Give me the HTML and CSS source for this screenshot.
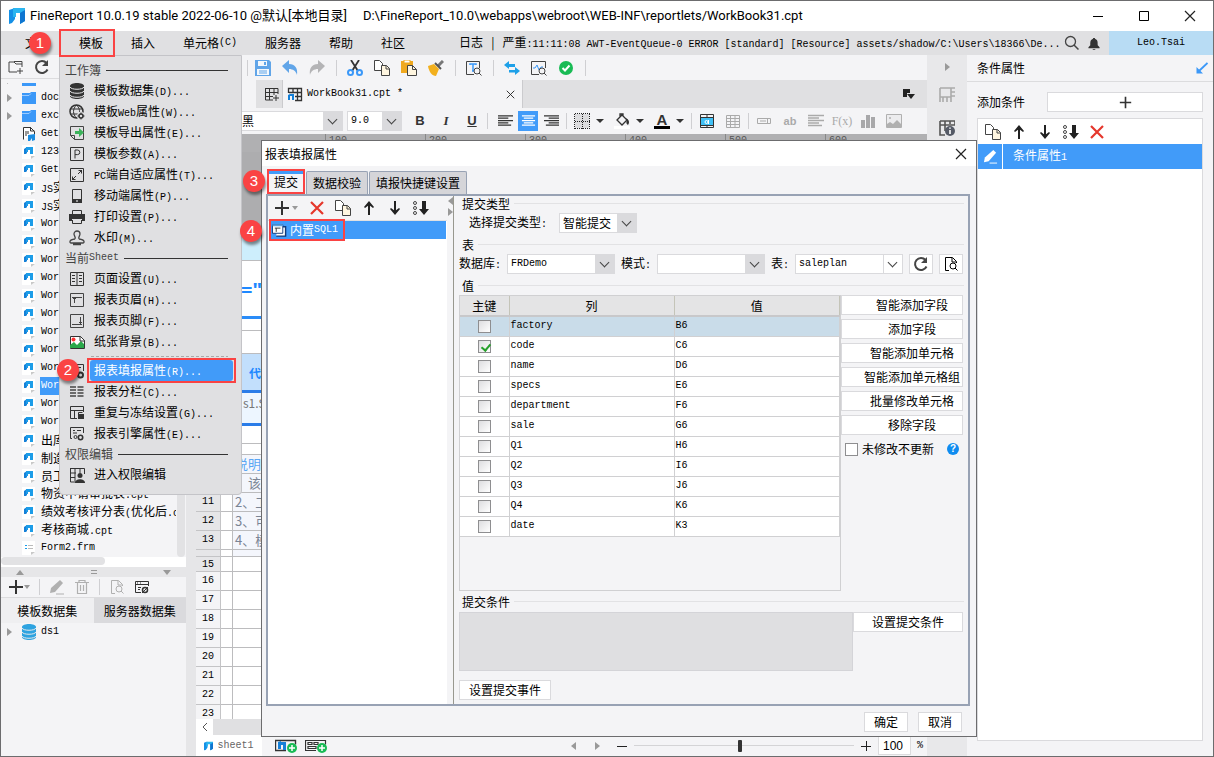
FILE: index.html
```html
<!DOCTYPE html>
<html lang="zh-CN">
<head>
    <meta charset="UTF-8">
    <meta name="viewport" content="width=device-width, initial-scale=1.0">
    <title>FineReport 10.0.19</title>
    <link rel="stylesheet" href="styles.css">
</head>
<body>
    <!-- 图标库 -->
    <svg class="sprite" aria-hidden="true">
        <symbol id="i-logo" viewBox="0 0 16 16"><path d="M0 2l6-2v11l-3 4-3 1z" fill="#1590e6"/><path d="M4 0h12v13l-5 3V5H7v4H4z" fill="#2bb5f0"/><path d="M11 5l5-3v11l-5 3z" fill="#0f75d0"/></symbol>
        <symbol id="i-plus" viewBox="0 0 16 16"><path d="M8 1v14M1 8h14" stroke="#333" stroke-width="2"/></symbol>
        <symbol id="i-refresh" viewBox="0 0 16 16"><path d="M13.500 10.500A6 6 0 1 1 12.500 4" fill="none" stroke="#444" stroke-width="2"/><path d="M14 1v6H8z" fill="#444"/></symbol>
        <symbol id="i-newdir" viewBox="0 0 16 16"><path d="M9 13H1V3h5l2 2h6v3M6 2.500h8V5M12 9v6M9 12h6" fill="none" stroke="#444"/></symbol>
        <symbol id="i-folder" viewBox="0 0 14 12"><path d="M0 1h8l1-1h5v12H0z" fill="#3b98f8"/><path d="M0 3.500h7l2-2" stroke="#9ccbff" fill="none"/></symbol>
        <symbol id="i-cpt" viewBox="0 0 14 16"><path d="M0 1h13v11l-4 3H0z" fill="#fff"/><path d="M9 15v-3h4z" fill="#c8c8c8"/><path d="M2 5l3-2v6l-1 1H2z" fill="#1580d8"/><path d="M4 3h7v7H8V6H6v2H4z" fill="#1c9ce8"/></symbol>
        <symbol id="i-frm" viewBox="0 0 14 16"><path d="M0 1h13v11l-4 3H0z" fill="#fff"/><path d="M9 15v-3h4z" fill="#c8c8c8"/><path d="M3 5.500h2M3 8.500h2" stroke="#1c9ce8"/><path d="M6 5.500h5M6 8.500h5" stroke="#bbb"/></symbol>
        <symbol id="i-get" viewBox="0 0 14 16"><path d="M1.500 13.500v-12h7l4 4v3" fill="#fff" stroke="#333"/><path d="M8.500 1v4h4M4 5v5M6 5v3" stroke="#333" fill="none"/><path d="M6 9l7-1v6l-3 1v-3l-2 3H6z" fill="#1c8ce0"/></symbol>
        <symbol id="i-db" viewBox="0 0 14 16"><path d="M0 3v10c0 4 14 4 14 0V3c0-4-14-4-14 0z"/><path d="M0 4c1 3 13 3 14 0M0 8c1 3 13 3 14 0M0 12c1 3 13 3 14 0" fill="none" stroke="#e8e8ea"/></symbol>
        <symbol id="i-web" viewBox="0 0 16 16"><circle cx="7.500" cy="7.500" r="6.500" fill="none" stroke="#333" stroke-width="1.500"/><path d="M1 5h13M1 10h8M7.500 1c-4 4-4 9 0 13M7.500 1c3 3 3 5 3 7" fill="none" stroke="#333"/><circle cx="12" cy="12" r="4" fill="#e0e0e2"/><circle cx="12" cy="12" r="2" fill="none" stroke="#333" stroke-width="1.500"/><path d="M12 8.500v7M8.500 12h7" stroke="#333" stroke-dasharray="1.500 4"/></symbol>
        <symbol id="i-export" viewBox="0 0 16 16"><path d="M1.500 1.500h13v13h-9l-4-4zM1.500 10.500h4v4" fill="none" stroke="#444"/><path d="M6 6h4V3l5 4.500-5 4.500V9H6z" fill="#3bb35a"/></symbol>
        <symbol id="i-param" viewBox="0 0 16 16"><path d="M1.500 1.500h13v13h-13zM6 12.500V4h2.500a2.300 2.300 0 0 1 0 4.600H6" fill="none" stroke="#333"/></symbol>
        <symbol id="i-fit" viewBox="0 0 16 16"><path d="M1.500 1.500h13v13h-13zM9 7l4-4M9.500 3.500h3v3M7 9l-4 4M3.500 9.500v3h3" fill="none" stroke="#333"/></symbol>
        <symbol id="i-phone" viewBox="0 0 16 16"><path d="M3.500 1.500h9v13h-9z" fill="none" stroke="#333"/><path d="M3 11h10v4H3z" fill="#333"/><path d="M7 13h2" stroke="#fff"/></symbol>
        <symbol id="i-print" viewBox="0 0 16 16"><path d="M3.500 5V1.500h9V5M3.500 11v3.500h9V11" fill="none" stroke="#333"/><path d="M0 5h16v7h-3v-2H3v2H0z" fill="#333"/></symbol>
        <symbol id="i-stamp" viewBox="0 0 16 16"><path d="M6 9c1-2-1-3-1-5a3 3 0 0 1 6 0c0 2-2 3-1 5M6 9c-7 1-5 4-4 4h12c1 0 3-3-4-4M4 14.500h8" fill="none" stroke="#444" stroke-width="1.300"/></symbol>
        <symbol id="i-page" viewBox="0 0 16 16"><path d="M1.500 1.500h13v13h-13zM8 2v12M3 4.500h3M3 7.500h3M3 10.500h3M10 4.500h3M10 7.500h3M10 10.500h3" fill="none" stroke="#333"/></symbol>
        <symbol id="i-head" viewBox="0 0 16 16"><path d="M1.500 1.500h13v13h-13zM3 5.500h10M5.500 5v6M4 7l1.500-1.500L7 7" fill="none" stroke="#444"/></symbol>
        <symbol id="i-foot" viewBox="0 0 16 16"><path d="M1.500 1.500h13v13h-13zM3 11.500h10M11.500 4v7M10 9l1.500 1.500L13 9" fill="none" stroke="#444"/></symbol>
        <symbol id="i-pic" viewBox="0 0 16 16"><path d="M1.500 2.500h10l4 4v8h-14z" fill="#fff" stroke="#333"/><circle cx="4.500" cy="5.500" r="2" fill="#f33"/><path d="M1 14V11l4-3 3 3 4-4 3 3v4z" fill="#2aa84a"/><path d="M11 2v5h5" fill="none" stroke="#333"/></symbol>
        <symbol id="i-fill" viewBox="0 0 16 16"><path d="M14.500 8V1.500h-13v12H7M4 4.500h8M4 7.500h5M4 10.500h3" fill="none" stroke="#333"/><circle cx="11.500" cy="12" r="2.500" fill="none" stroke="#333" stroke-width="2"/></symbol>
        <symbol id="i-cols" viewBox="0 0 16 16"><path d="M1 3h6M1 6h6M1 9h6M1 12h6M8.500 3h6M8.500 6h6M8.500 9h6M8.500 12h6" stroke="#444" stroke-width="1.500"/></symbol>
        <symbol id="i-freeze" viewBox="0 0 16 16"><path d="M14.500 7V1.500h-13v12H8M2 5.500h12M5.500 5v9M9.500 9V7.500h4" fill="none" stroke="#333"/><path d="M9 9h6v5H9z" fill="#333"/></symbol>
        <symbol id="i-engine" viewBox="0 0 16 16"><path d="M14.500 7V1.500h-13v11H3M4 4.500h2M8 4.500h4M4 7h4" fill="none" stroke="#333"/><circle cx="6.500" cy="11" r="1.500" fill="none" stroke="#333"/><circle cx="11.500" cy="11.500" r="2.200" fill="none" stroke="#333" stroke-width="1.600"/></symbol>
        <symbol id="i-auth" viewBox="0 0 16 16"><path d="M1 1.500h14.500V7M1.500 1v14H7M6 1v13M11 1v5M1 6h6M1 10.500h5" fill="none" stroke="#333"/><circle cx="11" cy="8.500" r="2.500" fill="#333"/><path d="M6 16c0-5 10-5 10 0z" fill="#333"/></symbol>
        <symbol id="i-save" viewBox="0 0 16 16"><path d="M0 0h14l2 2v14H0z" fill="#61a5e8"/><path d="M3 1h9v5H3zM2 9h12v6H2z" fill="#f4f8fc"/><path d="M9 2h2v3H9z" fill="#61a5e8"/><path d="M4 11h8M4 13h8" stroke="#61a5e8"/></symbol>
        <symbol id="i-undo" viewBox="0 0 16 16"><path d="M0 6l7-6v4c6 0 9 4 8 11-1-4-4-6-8-6v4z"/></symbol>
        <symbol id="i-cut" viewBox="0 0 16 16"><path d="M4 0l7 11M12 0L5 11" stroke="#333" stroke-width="1.800"/><circle cx="3.500" cy="12.500" r="2.500" fill="none" stroke="#3b98f8" stroke-width="2"/><circle cx="12.500" cy="12.500" r="2.500" fill="none" stroke="#3b98f8" stroke-width="2"/></symbol>
        <symbol id="i-copy" viewBox="0 0 16 16"><path d="M.5 .5h5l3 3v7h-8z" fill="#fff" stroke="#444"/><path d="M7.500 5.500h5l3 3v7h-8z" fill="#fff6e0" stroke="#444"/><path d="M12 5.500V9h3.500" fill="none" stroke="#444"/></symbol>
        <symbol id="i-paste" viewBox="0 0 16 16"><path d="M0 1h12v12H0z" fill="#f0a91e"/><path d="M3 0h6v3H3z" fill="#fff" stroke="#f0a91e"/><path d="M6.500 5.500h5l4 4v6h-9z" fill="#fff6e0" stroke="#444"/><path d="M11.500 5.500v4h4" fill="none" stroke="#444"/></symbol>
        <symbol id="i-brush" viewBox="0 0 16 16"><path d="M15 1l-5 5" stroke="#777" stroke-width="3"/><path d="M7 3l6 6" stroke="#555" stroke-width="2"/><path d="M0 6l6-2 5 5-3 7c-4 0-7-4-8-10z" fill="#f2b01e"/></symbol>
        <symbol id="i-find" viewBox="0 0 16 16"><path d="M8 14.500H.5v-13h13V8" fill="none" stroke="#444"/><path d="M4 5V4h6v1M7 4v7M6 11h2" fill="none" stroke="#3b98f8" stroke-width="1.500"/><circle cx="11" cy="11" r="3" fill="#f4f4f6" stroke="#444"/><path d="M13 13l2.500 2.500" stroke="#444"/></symbol>
        <symbol id="i-swap" viewBox="0 0 16 16"><path d="M0 5l5-4v3h6v3H5v2zM16 11l-5-4v3H5v2.500h6V15z" fill="#1ea0e8"/></symbol>
        <symbol id="i-monitor" viewBox="0 0 16 16"><path d="M8 14.500H.5v-13h14V8" fill="none" stroke="#444"/><path d="M2 8h2l2-3 2 5 2-3h2" fill="none" stroke="#3b98f8"/><circle cx="11" cy="11" r="3" fill="#f4f4f6" stroke="#444"/><path d="M13 13l2.500 2.500" stroke="#444"/></symbol>
        <symbol id="i-ok" viewBox="0 0 16 16"><circle cx="8" cy="8" r="7" fill="#19bb55"/><path d="M4.500 8l2.500 2.500 4.500-5" fill="none" stroke="#fff" stroke-width="2"/></symbol>
        <symbol id="i-addtab" viewBox="0 0 16 16"><path d="M1 2.500h13V8M1.500 2v12H9M1 6.500h13M1 10.500h8M5.500 2v12M10 2v7M12 9v6M9 12h6" fill="none" stroke="#333"/></symbol>
        <symbol id="i-book" viewBox="0 0 16 16"><path d="M1.500 7V2.500h13v12H8M2 6.500h12M8 10.500h6M6 2v4M10.500 2v12" fill="none" stroke="#333" stroke-width="1.300"/><path d="M1 9l2-1v6H1zM3 8h4v6H5v-4H3z" fill="#1580d8"/></symbol>
        <symbol id="i-close" viewBox="0 0 12 12"><path d="M1 1l10 10M11 1L1 11" stroke="#222" stroke-width="1.200"/></symbol>
        <symbol id="i-del" viewBox="0 0 14 14"><path d="M1 1l12 12M13 1L1 13" stroke="#e5372c" stroke-width="2.200"/></symbol>
        <symbol id="i-up" viewBox="0 0 12 14"><path d="M6 14V4" stroke="#222" stroke-width="2"/><path d="M1 6l5-6 5 6-1 1-4-3-4 3z" fill="#222"/></symbol>
        <symbol id="i-sort" viewBox="0 0 16 16"><path d="M9 1h4v8h3l-5 6-5-6h3z" fill="#222"/><circle cx="2" cy="3" r="1.500" fill="none" stroke="#444"/><circle cx="2" cy="8" r="1.500" fill="none" stroke="#444"/><circle cx="2" cy="13" r="1.500" fill="none" stroke="#444"/></symbol>
        <symbol id="i-left" viewBox="0 0 16 14"><path d="M0 1.500h16M0 4h11M0 6.500h16M0 9h11M0 11.500h14" stroke="currentColor" stroke-width="1.300"/></symbol>
        <symbol id="i-center" viewBox="0 0 16 14"><path d="M1 1.500h14M3 4h10M1 6.500h14M3 9h10M1 11.500h14" stroke="currentColor" stroke-width="1.300"/></symbol>
        <symbol id="i-right" viewBox="0 0 16 14"><path d="M0 1.500h16M5 4h11M0 6.500h16M5 9h11M2 11.500h14" stroke="currentColor" stroke-width="1.300"/></symbol>
        <symbol id="i-border" viewBox="0 0 16 16"><path d="M1 1h14v14H1z" fill="#dcdcde"/><path d="M1 .5h15M.5 1v15M1 15.500h15M15.500 1v15M1 8.500h15M8.500 1v15" stroke="#222" stroke-dasharray="1 1" fill="none"/></symbol>
        <symbol id="i-bucket" viewBox="0 0 16 16"><path d="M3 7l5-5 5 5-5 5zM6 4V1h3v3" fill="none" stroke="#333" stroke-width="1.300"/><path d="M12 5c3 2 4 4 2 7-2-1-2-3-1-5z" fill="#333"/><path d="M0 13h16v3H0z" fill="#fff"/></symbol>
        <symbol id="i-cell" viewBox="0 0 16 16"><path d="M1.500 1.500h13v13h-13z" fill="#3fc0f5" stroke="#333"/><path d="M2 2h12v2H2zM2 13h12v1H2z" fill="#f4f4f6"/><path d="M1 4.500h14M1 12.500h14M8 2v2M8 13v2" stroke="#333"/><circle cx="7.500" cy="9" r="1.500" fill="none" stroke="#fff"/><path d="M9.500 7v4" stroke="#fff"/></symbol>
        <symbol id="i-grid" viewBox="0 0 16 16"><path d="M1.500 2.500h13v12h-13zM1 5.500h14M1 8.500h14M1 11.500h14M5.500 2v13M10 2v13" fill="none" stroke="#aaa"/></symbol>
        <symbol id="i-field" viewBox="0 0 16 16"><path d="M1.500 5.500h13v5h-13zM4 8h6M11.500 6v4" fill="none" stroke="#aaa"/></symbol>
        <symbol id="i-bars" viewBox="0 0 16 16"><path d="M1 7h4v8H1zM6 2h4v13H6zM11 4h4v11h-4z" fill="#a8a8aa"/></symbol>
        <symbol id="i-image" viewBox="0 0 16 16"><path d="M.5 1.500h15v13H.5z" fill="#ececee" stroke="#b0b0b0"/><path d="M1 14V11l3-2 3 2 4-4 4 4v3z" fill="#b0b0b0"/><circle cx="4" cy="5" r="1" fill="#b0b0b0"/></symbol>
        <symbol id="i-prop" viewBox="0 0 16 16"><path d="M1 1h15M1 1v14M1 10h11V1M12 5h4M12 9h4M4 10v5M8 10v5M12 10v5" fill="none" stroke="#aaa" stroke-width="1.600"/></symbol>
        <symbol id="i-info" viewBox="0 0 16 16"><path d="M1 1h15v4M1 1v14h5M6 1v10M11 1v3M1 5h15" fill="none" stroke="#555" stroke-width="1.600"/><circle cx="11" cy="11" r="5" fill="#555a66"/><path d="M11 10v4M11 7.500v1.200" stroke="#fff" stroke-width="1.600"/></symbol>
        <symbol id="i-pencil" viewBox="0 0 16 16"><path d="M1 14l1-5 9-8 3 3-8 9z"/><path d="M7 15h8" stroke="currentColor"/></symbol>
        <symbol id="i-trash" viewBox="0 0 16 16"><path d="M1 3.500h14M5 3V1.500h6V3M3.500 4v10.500h9V4M6.500 6v6M9.500 6v6" fill="none" stroke="#b0b0b0" stroke-width="1.200"/></symbol>
        <symbol id="i-preview" viewBox="0 0 16 16"><path d="M6 14.500H2.500v-13h7l4 4V7M9 2v4h4" fill="none" stroke="currentColor"/><circle cx="10" cy="10" r="3" fill="none" stroke="currentColor"/><path d="M12 12l2.500 2.500" stroke="currentColor"/></symbol>
        <symbol id="i-conn" viewBox="0 0 16 16"><path d="M7 13.500H1.500v-11h13V7M1 5.500h13M4 8.500h3M4 10.500h2" fill="none" stroke="#333"/><path d="M3 4h1M6 4h1" stroke="#333"/><circle cx="11" cy="11" r="2.500" fill="none" stroke="#333" stroke-width="1.500"/><path d="M8 14l6-6" stroke="#333"/></symbol>
        <symbol id="i-search" viewBox="0 0 16 16"><circle cx="6.500" cy="6.500" r="5" fill="none" stroke="#444" stroke-width="1.300"/><path d="M10 10l4.500 4.500" stroke="#444" stroke-width="1.500"/></symbol>
        <symbol id="i-bell" viewBox="0 0 12 14"><path d="M5 1h2v1c3 1 3 3 3 7l2 2v1H0v-1l2-2c0-4 0-6 3-7zM4 13h4l-2 1z" fill="#333"/></symbol>
        <symbol id="i-pin" viewBox="0 0 12 12"><path d="M11.500 1L3 9" stroke="#3b98f8" stroke-width="1.800"/><path d="M.5 5v6.500H7z" fill="#3b98f8"/></symbol>
        <symbol id="i-sql" viewBox="0 0 16 14"><path d="M5.500 3.500h9v10h-10" fill="#fff" stroke="#123a7a" stroke-width="1.500"/><path d="M.5 1.500h11v9H.5z" fill="#fff" stroke="#123a7a"/><path d="M.5 2h11" stroke="#5aa0e0" stroke-width="2"/><path d="M3 5h6M4.500 5v4" stroke="#333"/></symbol>
        <symbol id="i-addcpt" viewBox="0 0 22 14"><path d="M11 11.500H.5V1.500h20v4" fill="none" stroke="#333" stroke-width="1.400"/><path d="M3 3l3-1v8H3zM6 3h5v8H8V6H6z" fill="#1580d8"/><circle cx="17" cy="9" r="5" fill="#19bb55"/><path d="M14 9h6M17 6v6" stroke="#fff" stroke-width="1.500"/></symbol>
        <symbol id="i-addfrm" viewBox="0 0 22 14"><path d="M11 11.500H.5V1.500h20v4M3 3.500h4v2H3zM9 3.500h4v2H9zM3 7.500h8v2H3z" fill="none" stroke="#333" stroke-width="1.200"/><circle cx="17" cy="9" r="5" fill="#19bb55"/><path d="M14 9h6M17 6v6" stroke="#fff" stroke-width="1.500"/></symbol>
    </svg>

    <div class="window">
        <header class="title-bar">
            <svg class="icon"><use href="#i-logo"/></svg>
            <span class="title-name">FineReport 10.0.19 stable 2022-06-10 @默认[本地目录]</span>
            <span class="title-path">D:\FineReport_10.0\webapps\webroot\WEB-INF\reportlets/WorkBook31.cpt</span>
            <button class="win-btn" aria-label="最小化"><svg viewBox="0 0 12 12"><path d="M1 6.500h10" stroke="#000"/></svg></button>
            <button class="win-btn" aria-label="最大化"><svg viewBox="0 0 12 12"><path d="M1.500 1.500h9v9h-9z" fill="none" stroke="#000"/></svg></button>
            <button class="win-btn" aria-label="关闭"><svg><use href="#i-close"/></svg></button>
        </header>

        <nav class="menu-bar">
            <button class="menu-item first">文件<b class="badge">1</b></button>
            <button class="menu-item marked">模板</button>
            <button class="menu-item">插入</button>
            <button class="menu-item">单元格<span class="en">(C)</span></button>
            <button class="menu-item">服务器</button>
            <button class="menu-item">帮助</button>
            <button class="menu-item">社区</button>
            <div class="log">日志<span class="bar">|</span>严重<span class="en">:11:11:08 AWT-EventQueue-0 ERROR [standard] [Resource] assets/shadow/C:\Users\18366\De...</span></div>
            <button class="icon-btn" aria-label="搜索"><svg class="icon"><use href="#i-search"/></svg></button>
            <button class="icon-btn" aria-label="通知"><svg class="icon"><use href="#i-bell"/></svg></button>
            <button class="user en">Leo.Tsai</button>
        </nav>

        <div class="workspace">
            <!-- 左侧：文件树与数据集 -->
            <aside class="left">
                <div class="left-tools">
                    <button class="icon-btn" aria-label="新建目录"><svg class="icon"><use href="#i-newdir"/></svg></button>
                    <button class="icon-btn" aria-label="刷新"><svg class="icon"><use href="#i-refresh"/></svg></button>
                </div>
                <div class="tree-area">
                    <ul class="tree">
                        <li class="node dir"><svg><use href="#i-folder"/></svg><span class="en">dem</span></li>
                        <li class="node dir"><svg><use href="#i-folder"/></svg><span class="en">doc</span></li>
                        <li class="node dir"><svg><use href="#i-folder"/></svg><span class="en">exc</span></li>
                        <li class="node"><svg><use href="#i-get"/></svg><span class="en">Get</span></li>
                        <li class="node"><svg><use href="#i-cpt"/></svg><span class="en">123</span></li>
                        <li class="node"><svg><use href="#i-cpt"/></svg><span class="en">Get</span></li>
                        <li class="node"><svg><use href="#i-cpt"/></svg><span><span class="en">JS</span>实</span></li>
                        <li class="node"><svg><use href="#i-cpt"/></svg><span><span class="en">JS</span>实</span></li>
                        <li class="node"><svg><use href="#i-cpt"/></svg><span class="en">Wor</span></li>
                        <li class="node"><svg><use href="#i-cpt"/></svg><span class="en">Wor</span></li>
                        <li class="node"><svg><use href="#i-cpt"/></svg><span class="en">Wor</span></li>
                        <li class="node"><svg><use href="#i-cpt"/></svg><span class="en">Wor</span></li>
                        <li class="node"><svg><use href="#i-cpt"/></svg><span class="en">Wor</span></li>
                        <li class="node"><svg><use href="#i-cpt"/></svg><span class="en">Wor</span></li>
                        <li class="node"><svg><use href="#i-cpt"/></svg><span class="en">Wor</span></li>
                        <li class="node"><svg><use href="#i-cpt"/></svg><span class="en">Wor</span></li>
                        <li class="node"><svg><use href="#i-cpt"/></svg><span class="en">Wor</span></li>
                        <li class="node selected"><svg><use href="#i-cpt"/></svg><span class="en">Wor</span></li>
                        <li class="node"><svg><use href="#i-cpt"/></svg><span class="en">Wor</span></li>
                        <li class="node"><svg><use href="#i-cpt"/></svg><span class="en">Wor</span></li>
                        <li class="node"><svg><use href="#i-cpt"/></svg><span>出库</span></li>
                        <li class="node"><svg><use href="#i-cpt"/></svg><span>制造</span></li>
                        <li class="node"><svg><use href="#i-cpt"/></svg><span>员工</span></li>
                        <li class="node"><svg><use href="#i-cpt"/></svg><span>物资申请审批表<span class="en">.cpt</span></span></li>
                        <li class="node"><svg><use href="#i-cpt"/></svg><span>绩效考核评分表<span class="en">(</span>优化后<span class="en">.cpt</span></span></li>
                        <li class="node"><svg><use href="#i-cpt"/></svg><span>考核商城<span class="en">.cpt</span></span></li>
                        <li class="node"><svg><use href="#i-frm"/></svg><span class="en">Form2.frm</span></li>
                    </ul>
                    <div class="tree-scroll"></div>
                </div>
                <div class="tree-hscroll"><div class="thumb"></div></div>
                <div class="splitter"><i class="tri up"></i><span class="grip"></span><i class="tri down"></i></div>
                <div class="ds-tools">
                    <button class="icon-btn" aria-label="新增"><svg class="icon"><use href="#i-plus"/></svg><i class="tri down small"></i></button>
                    <span class="sep"></span>
                    <button class="icon-btn faded" aria-label="编辑"><svg class="icon"><use href="#i-pencil"/></svg></button>
                    <button class="icon-btn" aria-label="删除"><svg class="icon"><use href="#i-trash"/></svg></button>
                    <span class="sep"></span>
                    <button class="icon-btn faded" aria-label="预览"><svg class="icon"><use href="#i-preview"/></svg></button>
                    <button class="icon-btn" aria-label="数据连接"><svg class="icon"><use href="#i-conn"/></svg></button>
                </div>
                <div class="ds-tabs">
                    <button class="ds-tab">模板数据集</button>
                    <button class="ds-tab active">服务器数据集</button>
                </div>
                <ul class="ds-list">
                    <li class="node dir"><svg class="blue"><use href="#i-db"/></svg><span class="en">ds1</span></li>
                </ul>
            </aside>

            <!-- 中间：设计区 -->
            <main class="center">
                <div class="toolbar main-tools">
                    <span class="sep"></span>
                    <button class="icon-btn" aria-label="保存"><svg class="icon"><use href="#i-save"/></svg></button>
                    <button class="icon-btn" aria-label="撤销"><svg class="icon undo"><use href="#i-undo"/></svg></button>
                    <button class="icon-btn" aria-label="重做"><svg class="icon redo"><use href="#i-undo"/></svg></button>
                    <span class="sep"></span>
                    <button class="icon-btn" aria-label="剪切"><svg class="icon"><use href="#i-cut"/></svg></button>
                    <button class="icon-btn" aria-label="复制"><svg class="icon"><use href="#i-copy"/></svg></button>
                    <button class="icon-btn" aria-label="粘贴"><svg class="icon"><use href="#i-paste"/></svg></button>
                    <button class="icon-btn" aria-label="格式刷"><svg class="icon"><use href="#i-brush"/></svg></button>
                    <span class="sep"></span>
                    <button class="icon-btn" aria-label="查找"><svg class="icon"><use href="#i-find"/></svg></button>
                    <span class="sep"></span>
                    <button class="icon-btn" aria-label="切换"><svg class="icon"><use href="#i-swap"/></svg></button>
                    <button class="icon-btn" aria-label="监控"><svg class="icon"><use href="#i-monitor"/></svg></button>
                    <button class="icon-btn" aria-label="校验"><svg class="icon"><use href="#i-ok"/></svg></button>
                    <span class="sep"></span>
                </div>
                <div class="file-tabs">
                    <button class="add-tab" aria-label="新建模板"><svg class="icon"><use href="#i-addtab"/></svg></button>
                    <div class="file-tab">
                        <svg class="icon"><use href="#i-book"/></svg>
                        <span class="en">WorkBook31.cpt *</span>
                        <button class="tab-close" aria-label="关闭"><svg><use href="#i-close"/></svg></button>
                    </div>
                    <button class="tab-list" aria-label="模板列表"><svg viewBox="0 0 12 10"><path d="M0 0h7v4H4v4H0z" fill="#222"/><path d="M4 5h8l-4 5z" fill="#222"/></svg></button>
                </div>
                <div class="toolbar format-tools">
                    <span class="combo font"><select aria-label="字体"><option>黑</option></select></span>
                    <span class="combo size"><select class="en" aria-label="字号"><option>9.0</option></select></span>
                    <button class="style-btn"><b>B</b></button>
                    <button class="style-btn"><i>I</i></button>
                    <button class="style-btn"><u>U</u></button>
                    <span class="sep"></span>
                    <button class="align-btn" aria-label="左对齐"><svg class="icon"><use href="#i-left"/></svg></button>
                    <button class="align-btn on" aria-label="居中"><svg class="icon"><use href="#i-center"/></svg></button>
                    <button class="align-btn" aria-label="右对齐"><svg class="icon"><use href="#i-right"/></svg></button>
                    <span class="sep"></span>
                    <button class="drop-btn" aria-label="边框"><svg class="icon"><use href="#i-border"/></svg><i class="tri down small dark"></i></button>
                    <button class="drop-btn" aria-label="背景色"><svg class="icon"><use href="#i-bucket"/></svg><i class="tri down small dark"></i></button>
                    <button class="drop-btn"><b class="font-color">A</b><i class="tri down small dark"></i></button>
                    <span class="sep"></span>
                    <button class="icon-btn" aria-label="合并单元格"><svg class="icon"><use href="#i-cell"/></svg></button>
                    <button class="icon-btn" aria-label="拆分单元格"><svg class="icon"><use href="#i-grid"/></svg></button>
                    <span class="sep"></span>
                    <button class="icon-btn" aria-label="数据列"><svg class="icon"><use href="#i-field"/></svg></button>
                    <button class="icon-btn grey ab">ab</button>
                    <button class="icon-btn grey" aria-label="富文本"><svg class="icon"><use href="#i-left"/></svg></button>
                    <button class="icon-btn grey fx">F(x)</button>
                    <button class="icon-btn" aria-label="图表"><svg class="icon"><use href="#i-bars"/></svg></button>
                    <button class="icon-btn" aria-label="图片"><svg class="icon"><use href="#i-image"/></svg></button>
                </div>
                <div class="ruler"><span class="lead"></span><span>100</span><span>200</span><span>300</span><span>400</span><span>500</span><span>600</span></div>
                <div class="sheet">
                    <div class="line shade"></div>
                    <div class="line cyan"></div>
                    <div class="line formula"><span>="</span></div>
                    <div class="line blank"></div>
                    <div class="line blank tall"></div>
                    <div class="line caption"><span>代</span></div>
                    <div class="line bound"><span>s1.S</span></div>
                    <div class="line blank"></div>
                    <div class="line blank short"></div>
                    <div class="row note"><span class="no en"></span><span class="gap"></span><span class="cell hint">说明</span></div>
                    <div class="row note"><span class="no en"></span><span class="gap"></span><span class="cell">、该</span></div>
                    <div class="row note"><span class="no en">11</span><span class="gap"></span><span class="cell">2、工</span></div>
                    <div class="row note"><span class="no en">12</span><span class="gap"></span><span class="cell">3、可</span></div>
                    <div class="row note"><span class="no en">13</span><span class="gap"></span><span class="cell">4、模</span></div>
                    <div class="row note thin"><span class="no en"></span><span class="gap"></span><span class="cell"></span></div>
                    <div class="row tint"><span class="no en">15</span><span class="gap"></span><span class="cell"></span></div>
                    <div class="row"><span class="no en">16</span><span class="gap"></span><span class="cell"></span></div>
                    <div class="row"><span class="no en">17</span><span class="gap"></span><span class="cell"></span></div>
                    <div class="row"><span class="no en">18</span><span class="gap"></span><span class="cell"></span></div>
                    <div class="row"><span class="no en">19</span><span class="gap"></span><span class="cell"></span></div>
                    <div class="row"><span class="no en">20</span><span class="gap"></span><span class="cell"></span></div>
                    <div class="row"><span class="no en">21</span><span class="gap"></span><span class="cell"></span></div>
                    <div class="row"><span class="no en">22</span><span class="gap"></span><span class="cell"></span></div>
                    <div class="row"><span class="no en">23</span><span class="gap"></span><span class="cell"></span></div>
                </div>
                <div class="sheet-scroll"><button aria-label="向左滚动"><svg viewBox="0 0 8 10"><path d="M6 1L2 5l4 4" fill="none" stroke="#555"/></svg></button></div>
                <div class="status">
                    <button class="sheet-tab"><svg viewBox="0 0 16 16"><use href="#i-logo"/></svg><span class="en">sheet1</span></button>
                    <button class="add-sheet" aria-label="新增sheet"><svg><use href="#i-addcpt"/></svg></button>
                    <button class="add-sheet" aria-label="新增表单"><svg><use href="#i-addfrm"/></svg></button>
                    <div class="zoom">
                        <button class="nav" aria-label="上一个"><i class="tri back"></i></button>
                        <button class="nav" aria-label="下一个"><i class="tri fwd"></i></button>
                        <button aria-label="缩小"><svg viewBox="0 0 10 10"><path d="M0 5.500h10" stroke="#222"/></svg></button>
                        <input class="slider" type="range" min="0" max="100" value="48" aria-label="缩放">
                        <button aria-label="放大"><svg viewBox="0 0 10 10"><path d="M0 5.500h10M5.500 0v10" stroke="#222"/></svg></button>
                        <input class="percent" type="text" value="100" aria-label="缩放比例">
                        <span class="en">%</span>
                    </div>
                </div>
            </main>

            <div class="strip">
                <i class="tri fwd"></i>
                <button class="icon-btn" aria-label="单元格元素"><svg class="icon"><use href="#i-prop"/></svg></button>
                <button class="icon-btn" aria-label="单元格属性"><svg class="icon"><use href="#i-info"/></svg></button>
            </div>

            <!-- 右侧：条件属性 -->
            <aside class="right">
                <div class="right-head">条件属性<svg><use href="#i-pin"/></svg></div>
                <div class="right-add"><label for="addCond">添加条件</label><button id="addCond" class="btn" aria-label="添加条件"><svg><use href="#i-plus"/></svg></button></div>
                <div class="cond-box">
                    <div class="list-tools">
                        <button aria-label="复制"><svg class="icon"><use href="#i-copy"/></svg></button>
                        <button aria-label="上移"><svg class="arrow"><use href="#i-up"/></svg></button>
                        <button aria-label="下移"><svg class="arrow flip"><use href="#i-up"/></svg></button>
                        <button aria-label="排序"><svg class="icon"><use href="#i-sort"/></svg></button>
                        <button aria-label="删除"><svg class="arrow"><use href="#i-del"/></svg></button>
                    </div>
                    <div class="cond-row"><span class="pen"><svg><use href="#i-pencil"/></svg></span><span>条件属性<span class="en">1</span></span></div>
                </div>
            </aside>
        </div>

        <!-- 模板下拉菜单 -->
        <div class="popup">
            <div class="popup-head">工作簿</div>
            <button class="popup-item"><svg class="icon"><use href="#i-db"/></svg><span class="label">模板数据集<span class="en">(D)...</span></span></button>
            <button class="popup-item"><svg class="icon"><use href="#i-web"/></svg><span class="label">模板<span class="en">Web</span>属性<span class="en">(W)...</span></span></button>
            <button class="popup-item"><svg class="icon"><use href="#i-export"/></svg><span class="label">模板导出属性<span class="en">(E)...</span></span></button>
            <button class="popup-item"><svg class="icon"><use href="#i-param"/></svg><span class="label">模板参数<span class="en">(A)...</span></span></button>
            <button class="popup-item"><svg class="icon"><use href="#i-fit"/></svg><span class="label"><span class="en">PC</span>端自适应属性<span class="en">(T)...</span></span></button>
            <button class="popup-item"><svg class="icon"><use href="#i-phone"/></svg><span class="label">移动端属性<span class="en">(P)...</span></span></button>
            <button class="popup-item"><svg class="icon"><use href="#i-print"/></svg><span class="label">打印设置<span class="en">(P)...</span></span></button>
            <button class="popup-item"><svg class="icon"><use href="#i-stamp"/></svg><span class="label">水印<span class="en">(M)...</span></span></button>
            <div class="popup-head">当前<span class="en">Sheet</span></div>
            <button class="popup-item"><svg class="icon"><use href="#i-page"/></svg><span class="label">页面设置<span class="en">(U)...</span></span></button>
            <button class="popup-item"><svg class="icon"><use href="#i-head"/></svg><span class="label">报表页眉<span class="en">(H)...</span></span></button>
            <button class="popup-item"><svg class="icon"><use href="#i-foot"/></svg><span class="label">报表页脚<span class="en">(F)...</span></span></button>
            <button class="popup-item"><svg class="icon"><use href="#i-pic"/></svg><span class="label">纸张背景<span class="en">(B)...</span></span></button>
            <div class="popup-sep"></div>
            <button class="popup-item active"><b class="badge">2</b><svg class="icon"><use href="#i-fill"/></svg><span class="label">报表填报属性<span class="en">(R)...</span></span></button>
            <button class="popup-item"><svg class="icon"><use href="#i-cols"/></svg><span class="label">报表分栏<span class="en">(C)...</span></span></button>
            <button class="popup-item"><svg class="icon"><use href="#i-freeze"/></svg><span class="label">重复与冻结设置<span class="en">(G)...</span></span></button>
            <button class="popup-item"><svg class="icon"><use href="#i-engine"/></svg><span class="label">报表引擎属性<span class="en">(E)...</span></span></button>
            <div class="popup-head">权限编辑</div>
            <button class="popup-item"><svg class="icon"><use href="#i-auth"/></svg><span class="label">进入权限编辑</span></button>
        </div>

        <!-- 报表填报属性对话框 -->
        <section class="dialog">
            <div class="dialog-title">报表填报属性<button aria-label="关闭"><svg><use href="#i-close"/></svg></button></div>
            <div class="dialog-tabs">
                <button class="dialog-tab current marked">提交<b class="badge">3</b></button>
                <button class="dialog-tab">数据校验</button>
                <button class="dialog-tab">填报快捷键设置</button>
            </div>
            <div class="dialog-body">
                <div class="submit-list">
                    <div class="list-tools">
                        <button class="plus" aria-label="新增"><svg class="icon"><use href="#i-plus"/></svg><i class="tri down small"></i></button>
                        <button aria-label="删除"><svg class="arrow"><use href="#i-del"/></svg></button>
                        <button aria-label="复制"><svg class="icon"><use href="#i-copy"/></svg></button>
                        <button aria-label="上移"><svg class="arrow"><use href="#i-up"/></svg></button>
                        <button aria-label="下移"><svg class="arrow flip"><use href="#i-up"/></svg></button>
                        <button aria-label="排序"><svg class="icon"><use href="#i-sort"/></svg></button>
                    </div>
                    <div class="submit-item"><span class="item-name marked"><svg><use href="#i-sql"/></svg>内置<span class="en">SQL1</span><b class="badge">4</b></span></div>
                </div>
                <div class="divider"><i class="tri back"></i><i class="tri fwd"></i></div>
                <div class="form">
                    <div class="group-head">提交类型</div>
                    <div class="form-row type-row">
                        <label for="submitType">选择提交类型<span class="en">:</span></label>
                        <span class="combo type"><select id="submitType"><option>智能提交</option></select></span>
                    </div>
                    <div class="group-head">表</div>
                    <div class="form-row">
                        <label for="database">数据库<span class="en">:</span></label>
                        <span class="combo base"><select id="database" class="en"><option>FRDemo</option></select></span>
                        <label for="schema">模式<span class="en">:</span></label>
                        <span class="combo base"><select id="schema"><option></option></select></span>
                        <label for="tableName">表<span class="en">:</span></label>
                        <span class="combo base plain"><select id="tableName" class="en"><option>saleplan</option></select></span>
                        <button class="btn square" aria-label="刷新"><svg class="icon"><use href="#i-refresh"/></svg></button>
                        <button class="btn square" aria-label="预览"><svg class="icon"><use href="#i-preview"/></svg></button>
                    </div>
                    <div class="group-head">值</div>
                    <div class="value-row">
                        <div class="table-box">
                            <table class="values">
                                <thead>
                                    <tr><th class="key">主键</th><th class="col">列</th><th>值</th></tr>
                                </thead>
                                <tbody>
                                    <tr class="picked"><td><input type="checkbox" aria-label="factory"></td><td>factory</td><td>B6</td></tr>
                                    <tr><td><input type="checkbox" aria-label="code" checked></td><td>code</td><td>C6</td></tr>
                                    <tr><td><input type="checkbox" aria-label="name"></td><td>name</td><td>D6</td></tr>
                                    <tr><td><input type="checkbox" aria-label="specs"></td><td>specs</td><td>E6</td></tr>
                                    <tr><td><input type="checkbox" aria-label="department"></td><td>department</td><td>F6</td></tr>
                                    <tr><td><input type="checkbox" aria-label="sale"></td><td>sale</td><td>G6</td></tr>
                                    <tr><td><input type="checkbox" aria-label="Q1"></td><td>Q1</td><td>H6</td></tr>
                                    <tr><td><input type="checkbox" aria-label="Q2"></td><td>Q2</td><td>I6</td></tr>
                                    <tr><td><input type="checkbox" aria-label="Q3"></td><td>Q3</td><td>J6</td></tr>
                                    <tr><td><input type="checkbox" aria-label="Q4"></td><td>Q4</td><td>K6</td></tr>
                                    <tr><td><input type="checkbox" aria-label="date"></td><td>date</td><td>K3</td></tr>
                                </tbody>
                            </table>
                        </div>
                        <div class="actions">
                            <button class="btn">智能添加字段</button>
                            <button class="btn">添加字段</button>
                            <button class="btn">智能添加单元格</button>
                            <button class="btn">智能添加单元格组</button>
                            <button class="btn">批量修改单元格</button>
                            <button class="btn">移除字段</button>
                            <div class="keep"><label><input type="checkbox">未修改不更新</label><button class="help" aria-label="帮助">?</button></div>
                        </div>
                    </div>
                    <div class="group-head">提交条件</div>
                    <div class="cond-set"><div class="cond-view"></div><button class="btn">设置提交条件</button></div>
                    <button class="btn event">设置提交事件</button>
                </div>
            </div>
            <div class="dialog-foot"><button class="btn">确定</button><button class="btn">取消</button></div>
        </section>
    </div>
</body>
</html>
```

FILE: styles.css
```css
* {
    box-sizing: border-box;
}

body {
    margin: 0;
    font: 12px/18px "Noto Sans CJK SC", sans-serif;
    color: #000;
    background: #f4f4f6;
}

button, input, select {
    margin: 0;
    padding: 0;
    border: none;
    background: none;
    font: inherit;
    color: inherit;
}

button {
    display: flex;
    align-items: center;
    justify-content: center;
    white-space: nowrap;
}

ul {
    list-style: none;
    margin: 0;
    padding: 0;
}

/* 西文等宽 */
.en {
    font-family: "Liberation Mono", "Noto Sans CJK SC", monospace;
    font-size: 10px;
}

.sprite {
    position: absolute;
    width: 0;
    height: 0;
}

.icon {
    width: 16px;
    height: 16px;
    flex: none;
}

.sep {
    width: 1px;
    height: 16px;
    background: #cfcfd2;
    flex: none;
}

.tri {
    border: 4px solid transparent;
    width: 0;
    height: 0;
    flex: none;
}

.tri.up { border-bottom: 5px solid #999; border-top: 0; }
.tri.down { border-top: 5px solid #999; border-bottom: 0; }
.tri.back { border-right: 5px solid #999; border-left: 0; }
.tri.fwd { border-left: 5px solid #999; border-right: 0; }
.tri.small { border-left-width: 3px; border-right-width: 3px; border-top-width: 4px; }
.tri.dark { border-left-width: 4px; border-right-width: 4px; border-top-color: #333; }

/* 红色标注 */
.marked {
    outline: 2px solid #fa4343;
    outline-offset: -2px;
}

.badge {
    position: absolute;
    width: 22px;
    height: 22px;
    border-radius: 50%;
    background: #fa4343;
    color: #fff;
    font: 15px/22px "Liberation Sans", sans-serif;
    text-align: center;
    box-shadow: 1px 3px 3px rgba(0, 0, 0, .45);
    z-index: 5;
}

.window {
    position: relative;
    display: flex;
    flex-direction: column;
    height: 100vh;
    min-height: 740px;
    border: 1px solid #6c6c6e;
}

/* 标题栏 */
.title-bar {
    display: flex;
    align-items: center;
    height: 30px;
    flex: none;
    padding-left: 8px;
    background: #fff;
    font: 13px/20px Roboto, "Noto Sans CJK SC", sans-serif;
    white-space: nowrap;
}

.title-name {
    margin: 0 16px 0 5px;
}

.title-path {
    flex: 1;
}

.win-btn {
    width: 46px;
    height: 30px;
}

.win-btn svg {
    width: 12px;
    height: 12px;
}

/* 菜单栏 */
.menu-bar {
    display: flex;
    align-items: center;
    height: 24px;
    flex: none;
    background: #e0e0e2;
}

.menu-item {
    position: relative;
    height: 24px;
    padding: 0 14px;
}

.menu-item.first {
    padding: 0 10px 0 24px;
}

.menu-item.first .badge {
    left: 28px;
    top: 1px;
}

.menu-item.marked {
    width: 56px;
    height: 28px;
    margin-right: 2px;
    padding: 0 0 0 8px;
    z-index: 4;
}

.log {
    flex: 1;
    margin-left: 40px;
    overflow: hidden;
    white-space: nowrap;
}

.bar {
    margin: 0 8px;
}

.icon-btn {
    flex: none;
    min-width: 16px;
    height: 18px;
}

.menu-bar .icon-btn {
    width: 22px;
}

.menu-bar .icon-btn:nth-last-child(2) .icon {
    height: 13px;
}

.user {
    width: 104px;
    height: 24px;
    margin-left: 4px;
    background: #b8dcf4;
}

.workspace {
    display: flex;
    flex: 1;
    min-height: 0;
}

/* 左侧 */
.left {
    display: flex;
    flex-direction: column;
    width: 185px;
    overflow: hidden;
}

.left-tools {
    display: flex;
    align-items: center;
    gap: 10px;
    height: 24px;
    padding-left: 7px;
    border-bottom: 1px solid #dcdcde;
}

.tree-area {
    display: flex;
    align-items: flex-end;
    height: 478px;
}

.tree {
    display: flex;
    flex-direction: column;
    justify-content: flex-end;
    width: 175px;
    height: 474px;
    overflow: hidden;
}

.node {
    position: relative;
    display: flex;
    align-items: center;
    flex: none;
    height: 18px;
    padding-left: 21px;
    white-space: nowrap;
}

.node svg {
    width: 14px;
    height: 16px;
    margin-right: 4px;
    flex: none;
}

.node > span {
    line-height: 18px;
    padding: 0 1px;
}

.node.dir::before {
    content: "";
    position: absolute;
    left: 6px;
    border: 4px solid transparent;
    border-left: 5px solid #999;
    border-right: 0;
}

.node.selected > span {
    flex: 1;
    background: #419bf9;
    color: #fff;
}

.node .blue {
    fill: #2ea3e0;
}

.tree-scroll {
    width: 8px;
    height: 100%;
    margin-left: 1px;
    border-radius: 4px;
    background: #e2e2e4;
}

.tree-hscroll {
    height: 10px;
    background: #fff;
}

.tree-hscroll .thumb {
    width: 56%;
    height: 8px;
    border-radius: 4px;
    background: #e2e2e4;
}

.splitter {
    display: flex;
    align-items: center;
    justify-content: space-between;
    height: 10px;
    padding: 0 15px;
    background: #e6e6e8;
}

.grip {
    width: 6px;
    height: 4px;
    border: 1px solid #999;
    border-width: 1px 0;
}

.ds-tools {
    display: flex;
    align-items: center;
    gap: 9px;
    height: 21px;
    padding-left: 7px;
    border-bottom: 1px solid #dcdcde;
}

.faded {
    color: #b0b0b0;
    fill: #b0b0b0;
}

.ds-tabs {
    display: flex;
    height: 25px;
}

.ds-tab {
    flex: 1;
    background: #efeff1;
}

.ds-tab.active {
    background: #dadadd;
}

/* 中间设计区 */
.center {
    display: flex;
    flex-direction: column;
    flex: 1;
    min-width: 0;
    border-left: 10px solid #e6e6e8;
}

.toolbar {
    display: flex;
    align-items: center;
    height: 25px;
    flex: none;
}

.main-tools {
    gap: 11px;
    padding-left: 51px;
}

.main-tools > .sep:first-child {
    margin-right: -4px;
}

.main-tools > .sep {
    margin-right: -1px;
}

.undo { fill: #61a5e8; }
.redo { fill: #b4b4b6; transform: scaleX(-1); }

.file-tabs {
    display: flex;
    align-items: center;
    height: 28px;
    flex: none;
    margin-left: 60px;
    background: #e0e0e2;
}

.add-tab {
    width: 26px;
    height: 28px;
    padding-left: 5px;
}

.file-tab {
    display: flex;
    align-items: center;
    gap: 4px;
    width: 241px;
    height: 28px;
    padding: 0 7px 0 4px;
    border: 1px solid #cbcbce;
    border-width: 0 1px;
    background: #f4f4f6;
}

.file-tab .en {
    line-height: 20px;
}

.tab-close {
    margin-left: auto;
}

.tab-close svg {
    width: 9px;
    height: 9px;
}

.tab-list {
    margin: 0 12px 0 auto;
}

.tab-list svg {
    width: 12px;
    height: 10px;
}

.format-tools {
    gap: 10px;
    height: 26px;
    padding-left: 42px;
}

.format-tools .combo.font { width: 105px; }
.format-tools .combo.size { width: 55px; margin-left: -6px; }

.format-tools .sep {
    margin: 0 -3px;
}

.style-btn {
    width: 16px;
    font: 13px/18px "Liberation Sans", sans-serif;
    color: #333;
}

.style-btn i {
    font-family: "Liberation Serif", serif;
    font-weight: bold;
}

.style-btn u {
    font-weight: bold;
}

.align-btn {
    width: 20px;
    height: 20px;
    margin-right: -7px;
    color: #333;
}

.align-btn .icon {
    height: 14px;
    width: 15px;
}

.align-btn.on {
    background: #419bf9;
    color: #fff;
}

.format-tools > .align-btn + .sep {
    margin-left: 2px;
}

.drop-btn {
    gap: 6px;
}

.font-color {
    width: 16px;
    height: 16px;
    border-bottom: 3px solid #000;
    font: bold 15px/13px "Liberation Sans", sans-serif;
    color: #333;
}

.grey {
    color: #aaa;
}

.ab, .fx {
    width: 16px;
    font: bold 11px/18px "Liberation Sans", sans-serif;
}

.fx {
    font: 12px/18px "Liberation Serif", serif;
}

.ruler {
    display: flex;
    height: 18px;
    flex: none;
    overflow: hidden;
    background: #b0b0b2;
    color: #555;
    font: 10px/14px "Liberation Mono", monospace;
}

.ruler span {
    flex: none;
    width: 100px;
    padding-left: 3px;
    border-left: 1px solid #888;
}

.ruler .lead {
    width: 129px;
    border: none;
}

/* 单元格网格 */
.sheet {
    flex: 1;
    min-height: 0;
    overflow: hidden;
    background: #fff;
}

.line {
    height: 12px;
    padding-left: 45px;
    border-bottom: 1px solid #bcbcbe;
    color: #1e88ff;
    white-space: nowrap;
}

.line.shade { height: 81px; background: #adadaf; border: none; }
.line.cyan { height: 28px; background: #cdeefc; }
.line.formula { height: 58px; border-bottom: 3px solid #2a8cf8; font: bold 20px/58px "Noto Sans", sans-serif; }
.line.tall { height: 23px; }
.line.caption { height: 39px; padding-left: 53px; background: #c2dffc; border-bottom: 3px solid #2a7ce8; font-weight: bold; line-height: 38px; }
.line.bound { height: 33px; padding-left: 47px; background: #edf6ff; border-bottom: 3px solid #2a7ce8; color: #777; line-height: 20px; }
.line.blank + .line.short { height: 11px; }
.line.bound + .line.blank { height: 18px; }

.row {
    display: flex;
    height: 19px;
}

.row .no {
    width: 25px;
    border: 1px solid #c4c4c6;
    border-width: 0 1px 1px 0;
    background: #f4f4f6;
    text-align: center;
}

.row.note .no, .row.tint .no {
    background: #e6e6e8;
}

.row .gap, .row .cell {
    width: 12px;
    border: 1px solid #bcbcbe;
    border-width: 0 1px 1px 0;
    overflow: hidden;
    white-space: nowrap;
}

.row .cell {
    flex: 1;
    padding-left: 2px;
    color: #7a8494;
    font-size: 13px;
}

.row.note .cell {
    background: #f4f6fc;
}

.row .hint {
    color: #5aa6f4;
}

.row.thin { height: 7px; }
.row.tint { height: 15px; line-height: 16px; }

.sheet-scroll {
    display: flex;
    height: 16px;
    flex: none;
    background: linear-gradient(90deg, #fff 17px, #e0e0e2 17px);
}

.sheet-scroll button {
    width: 17px;
}

.sheet-scroll svg {
    width: 8px;
    height: 10px;
}

.status {
    display: flex;
    align-items: center;
    height: 21px;
    flex: none;
}

.sheet-tab {
    gap: 4px;
    width: 66px;
    height: 21px;
    margin-right: 10px;
    background: #fff;
    color: #666;
}

.sheet-tab svg {
    width: 9px;
    height: 10px;
}

.add-sheet {
    margin-left: 3px;
    margin-right: 5px;
}

.add-sheet svg {
    width: 22px;
    height: 14px;
}

.zoom {
    display: flex;
    align-items: center;
    margin-left: auto;
    padding-right: 4px;
}

.zoom button {
    width: 24px;
    height: 16px;
}

.zoom svg {
    width: 10px;
    height: 10px;
}

.slider {
    appearance: none;
    width: 220px;
    height: 14px;
    background: linear-gradient(#d4d4d6, #d4d4d6) center / 100% 1px no-repeat;
}

.slider::-webkit-slider-thumb {
    appearance: none;
    width: 4px;
    height: 12px;
    border-radius: 1px;
    background: #333;
}

.percent {
    width: 33px;
    height: 19px;
    margin-right: 6px;
    padding-left: 4px;
    border: 1px solid #dcdcde;
    background: #fff;
    font-family: "Liberation Sans", sans-serif;
}

/* 右侧属性 */
.strip {
    display: flex;
    flex-direction: column;
    align-items: center;
    gap: 15px;
    width: 40px;
    padding-top: 8px;
    background: #e8e8ea;
}

.right {
    display: flex;
    flex-direction: column;
    width: 246px;
    padding-bottom: 15px;
}

.right-head {
    display: flex;
    align-items: center;
    justify-content: space-between;
    height: 27px;
    padding: 0 5px 0 10px;
    border-bottom: 1px solid #dcdcde;
}

.right-head svg {
    width: 12px;
    height: 12px;
}

.right-add {
    display: flex;
    align-items: center;
    gap: 22px;
    margin: 10px 10px 6px;
}

.right-add .btn {
    flex: 1;
}

.right-add svg {
    width: 13px;
    height: 13px;
}

.btn {
    height: 20px;
    border: 1px solid #dadadd;
    background: #fff;
}

.cond-box {
    flex: 1;
    margin: 0 10px;
    border: 1px solid #dadadd;
    background: #fff;
}

.list-tools {
    display: flex;
    align-items: center;
    height: 25px;
}

.list-tools button {
    width: 26px;
}

.cond-box .list-tools {
    padding-left: 2px;
}

.arrow {
    width: 14px;
    height: 14px;
}

.flip {
    transform: scaleY(-1);
}

.cond-row {
    display: flex;
    align-items: center;
    height: 25px;
    background: #419bf9;
    color: #fff;
    fill: #fff;
}

.pen {
    width: 25px;
    height: 25px;
    margin-right: 10px;
    padding: 5px;
    border-right: 1px solid #fff;
}

.pen svg {
    width: 15px;
    height: 15px;
}

/* 下拉框 */
.combo {
    position: relative;
    display: flex;
    height: 20px;
    flex: none;
}

.combo select {
    appearance: none;
    width: 100%;
    padding-left: 3px;
    border: 1px solid #dadadd;
    border-radius: 0;
    background: linear-gradient(90deg, #fff calc(100% - 19px), #dadadd calc(100% - 19px));
}

.combo::after {
    content: "";
    position: absolute;
    right: 7px;
    top: 5px;
    width: 6px;
    height: 6px;
    border: 1px solid #444;
    border-width: 0 1px 1px 0;
    transform: rotate(45deg);
    pointer-events: none;
}

.combo.plain select {
    background: linear-gradient(90deg, #fff calc(100% - 19px), #dadadd calc(100% - 19px), #dadadd calc(100% - 18px), #fff calc(100% - 18px));
}

/* 弹出菜单 */
.popup {
    position: absolute;
    left: 58px;
    top: 54px;
    width: 183px;
    padding: 4px 0 9px;
    border: 1px solid #c4c4c8;
    border-radius: 0 0 4px 4px;
    background: #e0e0e2;
    z-index: 2;
}

.popup-head {
    display: flex;
    align-items: center;
    gap: 5px;
    height: 20px;
    padding: 0 13px 0 5px;
    color: #444;
}

.popup-head .en {
    margin-left: -5px;
}

.popup-head::after {
    content: "";
    flex: 1;
    height: 1px;
    background: #333;
}

.popup-item {
    position: relative;
    justify-content: flex-start;
    width: 100%;
    height: 21px;
    padding-left: 9px;
    fill: #333;
}

.popup-item .label {
    position: relative;
    flex: 1;
    height: 21px;
    margin: 0 8px 0 5px;
    padding-left: 4px;
    line-height: 19px;
    text-align: left;
}

.popup-item.active .label {
    border-radius: 3px;
    background: #419bf9;
    color: #fff;
}

.popup-item.active .label::after {
    content: "";
    position: absolute;
    inset: -2px -3px;
    border: 2px solid #fa4343;
}

.popup-item.active .badge {
    left: -3px;
    top: -1px;
}

.popup-sep {
    height: 8px;
    margin: 0 13px 0 31px;
    background: repeating-linear-gradient(90deg, #aaa 0 3px, transparent 3px 5px) center / 100% 1px no-repeat;
}

/* 对话框 */
.dialog {
    position: absolute;
    left: 260px;
    right: 236px;
    top: 139px;
    border: 1px solid #6c6c6e;
    background: #f4f4f6;
    z-index: 3;
}

.dialog-title {
    display: flex;
    align-items: center;
    justify-content: space-between;
    height: 25px;
    padding: 0 9px 0 3px;
    background: #fff;
}

.dialog-title svg {
    width: 12px;
    height: 12px;
}

.dialog-tabs {
    display: flex;
    align-items: flex-end;
    gap: 1px;
    height: 28px;
    padding-left: 5px;
}

.dialog-tab {
    position: relative;
    height: 23px;
    padding: 0 6px;
    border: 1px solid #98a2b4;
    border-bottom: none;
    border-radius: 2px 2px 0 0;
    background: #d5d5d9;
}

.dialog-tab.current {
    height: 25px;
    border-radius: 0;
    background: linear-gradient(#419bf9 4px, #f4f4f6 4px);
}

.dialog-tab .badge {
    left: -25px;
    top: 0;
}

.dialog-body {
    display: flex;
    margin: 0 6px 6px 4px;
    border: 2px solid #98a2b4;
}

.submit-list {
    width: 179px;
    background: #fff;
}

.submit-list .list-tools {
    background: #f4f4f6;
    border-bottom: 1px solid #e0e0e2;
}

.list-tools .plus {
    width: 36px;
    gap: 2px;
}

.submit-item {
    height: 18px;
    margin: 0 1px;
    background: #419bf9;
    color: #fff;
}

.item-name {
    position: relative;
    display: inline-flex;
    align-items: center;
    height: 22px;
    margin-top: -2px;
    padding: 0 7px 0 3px;
}

.item-name svg {
    width: 15px;
    height: 14px;
    margin-right: 3px;
}

.item-name .badge {
    left: -29px;
    top: 1px;
}

.divider {
    display: flex;
    flex-direction: column;
    gap: 3px;
    width: 7px;
    padding: 1px;
    border-right: 1px solid #98988f;
}

.form {
    flex: 1;
    min-width: 0;
    padding: 0 4px 4px 3px;
}

.group-head {
    display: flex;
    align-items: center;
    gap: 4px;
    height: 15px;
    padding-left: 5px;
    line-height: 15px;
}

.group-head::after {
    content: "";
    flex: 1;
    height: 1px;
    background: #e2e2e4;
}

.form-row {
    display: flex;
    align-items: flex-start;
    gap: 6px;
    height: 26px;
    padding: 2px 0 0 2px;
}

.form-row label {
    white-space: nowrap;
}

.form-row.type-row {
    gap: 12px;
    padding-left: 12px;
}

.combo.type { width: 78px; }
.combo.base { width: 108px; }

.square {
    width: 24px;
}

.value-row {
    display: flex;
    margin: 2px 1px 3px 2px;
}

.table-box {
    flex: 1;
    min-height: 296px;
    border: 1px solid #d0d0d2;
}

.values {
    width: 100%;
    border-collapse: collapse;
    table-layout: fixed;
    background: #fff;
}

.values th {
    height: 20px;
    padding: 0;
    border-right: 1px solid #c4c4b8;
    border-bottom: 2px solid #c8c8ca;
    background: #e4e4e5;
    font-weight: normal;
}

.values .key { width: 49px; }
.values .col { width: 165px; }

.values td {
    height: 20px;
    padding: 0 0 0 1px;
    border: 1px solid #d0d0d2;
    border-width: 0 1px 1px 0;
    font: 10px/18px "Liberation Mono", monospace;
}

.values td:first-child {
    text-align: center;
}

.values .picked td {
    background: #c9dce9;
}

input[type="checkbox"] {
    appearance: none;
    position: relative;
    display: block;
    flex: none;
    width: 13px;
    height: 13px;
    border: 1px solid #8e8e90;
    background: linear-gradient(135deg, #dedee0, #fff);
}

.values input[type="checkbox"] {
    margin: 0 auto;
}

input[type="checkbox"]:checked::after {
    content: "";
    position: absolute;
    left: 4px;
    top: 1px;
    width: 4px;
    height: 7px;
    border: 2px solid #26a02c;
    border-width: 0 2px 2px 0;
    transform: rotate(40deg);
}

.actions {
    display: flex;
    flex-direction: column;
    gap: 4px;
    width: 122px;
}

.actions .btn {
    padding-left: 20px;
}

.keep {
    display: flex;
    align-items: center;
    justify-content: space-between;
    height: 20px;
    padding: 0 4px;
}

.keep label {
    display: flex;
    align-items: center;
    gap: 4px;
}

.keep input[type="checkbox"] {
    background: #fff;
}

.help {
    width: 12px;
    height: 12px;
    border-radius: 50%;
    background: #0f8cf0;
    color: #fff;
    font: bold 10px/12px "Liberation Sans", sans-serif;
}

.cond-set {
    display: flex;
    align-items: flex-start;
    margin: 3px 1px 9px 2px;
}

.cond-view {
    flex: 1;
    height: 59px;
    border: 1px solid #d4d4d8;
    background: #dfdfe1;
}

.cond-set .btn {
    width: 110px;
}

.event {
    width: 92px;
    margin-left: 2px;
}

.dialog-foot {
    display: flex;
    justify-content: flex-end;
    gap: 10px;
    padding: 0 14px 4px;
}

.dialog-foot .btn {
    width: 44px;
}
```
